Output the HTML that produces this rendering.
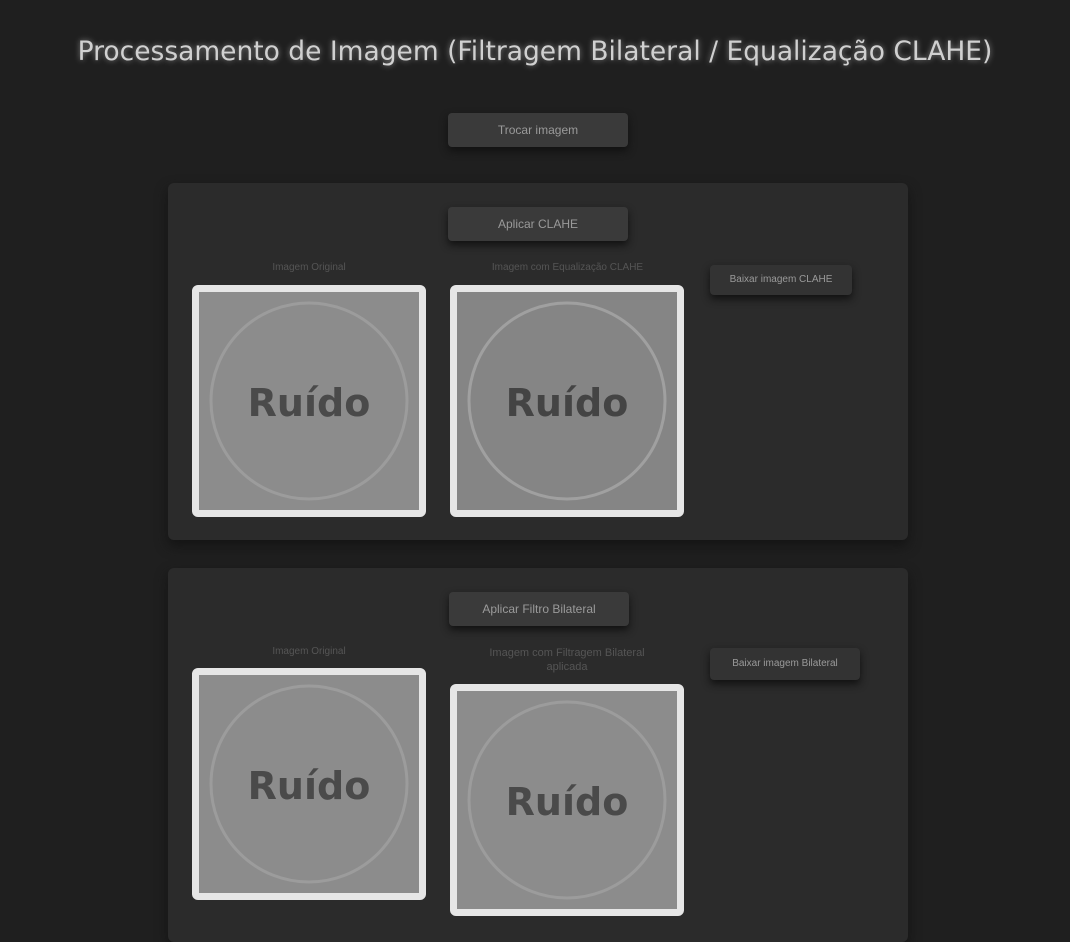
<!DOCTYPE html><html><head><style>
body{margin:0;background:#1f1f1f;font-family:"Liberation Sans",sans-serif;width:1070px;height:942px;overflow:hidden;position:relative}
h1{position:absolute;left:0;width:1070px;top:36px;margin:0;text-align:center;font-size:26.5px;font-weight:normal;color:#d0d0d0;text-shadow:0 0 6px #888;font-family:"DejaVu Sans",sans-serif;white-space:nowrap}
.btn{position:absolute;background:#3a3a3a;color:#9a9a9a;font-size:12px;text-align:center;border-radius:4px;box-shadow:0 4px 8px #111}
.panel{position:absolute;left:168px;width:740px;background:#2b2b2b;border-radius:6px;box-shadow:0 6px 12px #141414}
.lab{position:absolute;color:#555;font-size:10px;text-align:center}
.img{position:absolute;width:220px;height:218px;border:7px solid #e6e6e6;border-radius:6px;background:#8c8c8c}
</style></head><body>
<h1>Processamento de Imagem (Filtragem Bilateral / Equalização CLAHE)</h1>
<div class="btn" style="left:448px;top:113px;width:180px;height:34px;line-height:34px">Trocar imagem</div>
<div class="panel" style="top:183px;height:357px"></div>
<div class="btn" style="left:448px;top:207px;width:180px;height:34px;line-height:34px">Aplicar CLAHE</div>
<div class="lab" style="left:192px;top:262px;width:234px">Imagem Original</div>
<div class="lab" style="left:450px;top:262px;width:235px">Imagem com Equalização CLAHE</div>
<div class="btn" style="left:710px;top:265px;width:142px;height:30px;line-height:30px;font-size:10px;background:#333">Baixar imagem CLAHE</div>
<div class="img" style="left:192px;top:285px"><svg width="220" height="218"><circle cx="110" cy="109" r="98" fill="none" stroke="#9c9c9c" stroke-width="3"/><text x="110" y="124" font-size="38" font-weight="bold" text-anchor="middle" fill="#4a4a4a" font-family="DejaVu Sans">Ruído</text></svg></div>
<div class="img" style="left:450px;top:285px;background:#858585"><svg width="220" height="218"><circle cx="110" cy="109" r="98" fill="none" stroke="#a0a0a0" stroke-width="3"/><text x="110" y="124" font-size="38" font-weight="bold" text-anchor="middle" fill="#444" font-family="DejaVu Sans">Ruído</text></svg></div>
<div class="panel" style="top:568px;height:374px"></div>
<div class="btn" style="left:449px;top:592px;width:180px;height:34px;line-height:34px">Aplicar Filtro Bilateral</div>
<div class="lab" style="left:192px;top:646px;width:234px">Imagem Original</div>
<div class="lab" style="left:472px;top:646px;width:190px;line-height:14px;font-size:11px">Imagem com Filtragem Bilateral aplicada</div>
<div class="btn" style="left:710px;top:648px;width:150px;height:32px;line-height:32px;font-size:10px;background:#333">Baixar imagem Bilateral</div>
<div class="img" style="left:192px;top:668px"><svg width="220" height="218"><circle cx="110" cy="109" r="98" fill="none" stroke="#9c9c9c" stroke-width="3"/><text x="110" y="124" font-size="38" font-weight="bold" text-anchor="middle" fill="#4a4a4a" font-family="DejaVu Sans">Ruído</text></svg></div>
<div class="img" style="left:450px;top:684px"><svg width="220" height="218"><circle cx="110" cy="109" r="98" fill="none" stroke="#9c9c9c" stroke-width="3"/><text x="110" y="124" font-size="38" font-weight="bold" text-anchor="middle" fill="#4a4a4a" font-family="DejaVu Sans">Ruído</text></svg></div>
</body></html>
